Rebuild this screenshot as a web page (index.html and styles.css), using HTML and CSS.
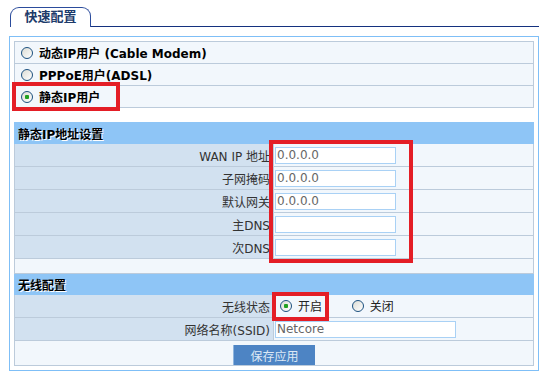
FILE: index.html
```html
<!DOCTYPE html>
<html lang="zh-CN">
<head>
    <meta charset="UTF-8">
    <title>快速配置</title>
    <link rel="stylesheet" href="styles.css">
</head>
<body>
    <div class="page">
        <div class="tabs">
            <div class="tab">快速配置</div>
        </div>

        <div class="frame">
            <table class="modes">
                <tr><td><label><input type="radio" name="mode">动态IP用户 (Cable Modem)</label></td></tr>
                <tr><td><label><input type="radio" name="mode">PPPoE用户(ADSL)</label></td></tr>
                <tr><td><label><input type="radio" name="mode" checked>静态IP用户</label></td></tr>
            </table>

            <table class="form">
                <tr class="head"><td colspan="2">静态IP地址设置</td></tr>
                <tr><th>WAN IP 地址</th><td><input type="text" value="0.0.0.0"></td></tr>
                <tr><th>子网掩码</th><td><input type="text" value="0.0.0.0"></td></tr>
                <tr><th>默认网关</th><td><input type="text" value="0.0.0.0"></td></tr>
                <tr><th>主DNS</th><td><input type="text" value=""></td></tr>
                <tr><th>次DNS</th><td><input type="text" value=""></td></tr>
                <tr class="blank"><td colspan="2"></td></tr>

                <tr class="head"><td colspan="2">无线配置</td></tr>
                <tr>
                    <th>无线状态</th>
                    <td>
                        <label class="opt"><input type="radio" name="wifi" checked>开启</label>
                        <label class="opt"><input type="radio" name="wifi">关闭</label>
                    </td>
                </tr>
                <tr><th>网络名称(SSID)</th><td><input type="text" class="wide" value="Netcore"></td></tr>
                <tr class="actions"><td colspan="2"><button>保存应用</button></td></tr>
            </table>
        </div>

        <!-- red marks over the screenshot -->
        <div class="mark mark-mode"></div>
        <div class="mark mark-ip"></div>
        <div class="mark mark-wifi"></div>
    </div>
</body>
</html>
```

FILE: styles.css
```css
body {
    margin: 0;
    background: #fff;
    font: 12px "DejaVu Sans", Verdana, "Noto Sans CJK SC", sans-serif;
    color: #222;
}

.page {
    position: relative;
    width: 550px;
    height: 381px;
    padding-top: 7px;
    box-sizing: border-box;
}

/* tab strip */
.tabs {
    display: flex;
    height: 19px;
    margin: 0 11px 0 10px;
    border-bottom: 1px solid #14317f;
}
.tab {
    width: 79px;
    height: 19px;
    margin-bottom: -1px;
    border: 1px solid #2b4c9c;
    border-bottom: none;
    border-radius: 9px 9px 0 0;
    background: #fff;
    text-align: center;
    line-height: 18px;
    font-size: 13px;
    font-weight: bold;
    color: #1d3b6b;
}

.frame {
    margin: 9px 11px 0 9px;
    padding: 4px 4px 4px;
    border: 1px solid #7fbff7;
}

table {
    width: 100%;
    border-collapse: collapse;
}

/* connection type */
.modes td {
    height: 21px;
    padding: 0 0 0 6px;
    border: 1px solid #bccbdb;
    background: #f2f7fc;
    font-weight: bold;
    color: #000;
}
.modes label {
    display: flex;
    align-items: center;
}

input[type="radio"] {
    appearance: none;
    width: 12px;
    height: 12px;
    margin: 0 6px 0 0;
    border: 1px solid #1c5180;
    border-radius: 50%;
    background: linear-gradient(135deg, #dcdcd4, #fff);
    box-sizing: border-box;
}
input[type="radio"]:checked {
    background: radial-gradient(circle, #21a121 0 2px, transparent 2.5px), linear-gradient(135deg, #dcdcd4, #fff);
}

/* settings */
.form {
    margin-top: 14px;
}
.form th,
.form td {
    height: 22px;
    padding: 0;
    border: 1px solid #bccbdb;
    border-top-color: #e4edf6;
}
.form th {
    width: 255px;
    padding-right: 3px;
    background: #d2e1f0;
    text-align: right;
    font-weight: normal;
    color: #333;
}
.form td {
    padding-left: 1px;
    background: #f2f7fc;
}
.form .head td {
    height: 20px;
    padding-left: 3px;
    border-color: #8ec5f6;
    background: #8ec5f6;
    font-weight: bold;
    color: #000;
    text-shadow: 1px 1px 0 #fff;
}
.form .blank td {
    height: 14px;
}

input[type="text"] {
    width: 121px;
    height: 17px;
    margin: 0;
    padding: 0 1px;
    border: 1px solid #a9d1f5;
    box-sizing: border-box;
    font: 12px "DejaVu Sans", Verdana, sans-serif;
    color: #666;
    vertical-align: middle;
}
input.wide {
    width: 181px;
}

.opt {
    display: inline-flex;
    align-items: center;
    margin-left: 5px;
    margin-right: 21px;
}

.form .actions td {
    padding: 2px 0 0;
    text-align: center;
    vertical-align: bottom;
}
button {
    display: block;
    width: 82px;
    height: 20px;
    margin: 0 auto;
    border: none;
    border-left: 1px solid #8fb5de;
    background: #4d84c4;
    color: #dde8f5;
    font: 12px "DejaVu Sans", "Noto Sans CJK SC", sans-serif;
    cursor: pointer;
}

/* annotation boxes */
.mark {
    position: absolute;
    border: 4px solid #e41e26;
    box-sizing: border-box;
}
.mark-mode {
    left: 12px;
    top: 82px;
    width: 108px;
    height: 29px;
}
.mark-ip {
    left: 269px;
    top: 140px;
    width: 144px;
    height: 123px;
}
.mark-wifi {
    left: 272px;
    top: 292px;
    width: 57px;
    height: 29px;
}
```
